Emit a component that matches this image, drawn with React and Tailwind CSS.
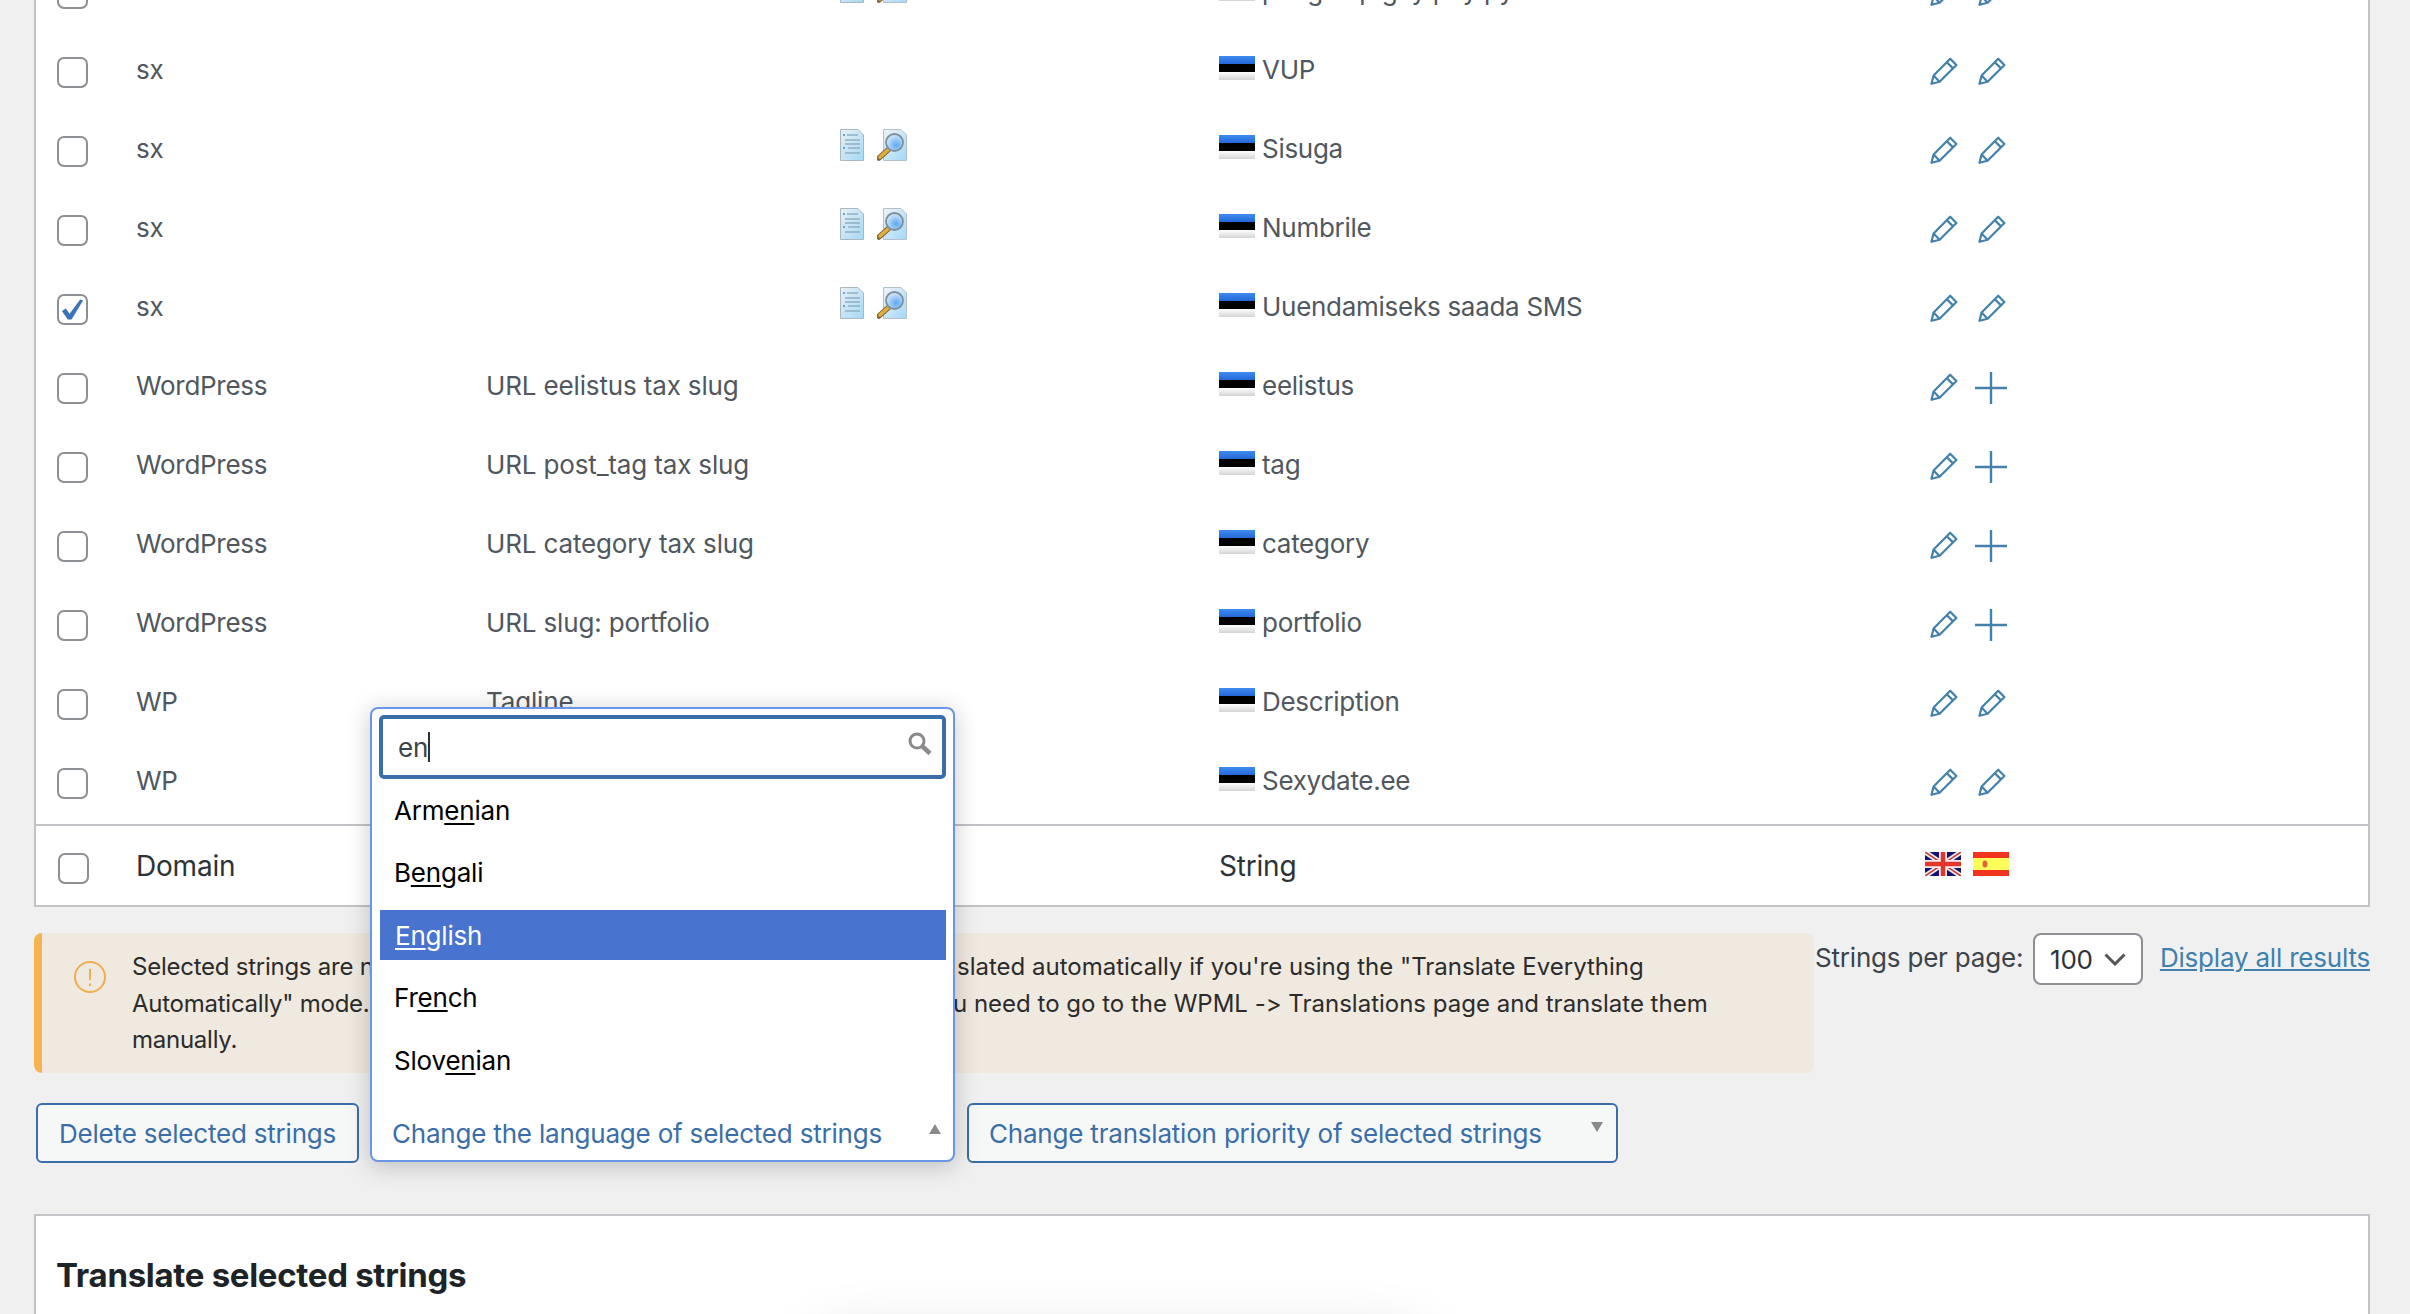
const ROWS = [
  { domain: 'sx', context: '', icons: true, text: 'pange ap gay pay py', second: 'edit' },
  { domain: 'sx', context: '', icons: false, text: 'VUP', second: 'edit' },
  { domain: 'sx', context: '', icons: true, text: 'Sisuga', second: 'edit' },
  { domain: 'sx', context: '', icons: true, text: 'Numbrile', second: 'edit' },
  { domain: 'sx', context: '', icons: true, text: 'Uuendamiseks saada SMS', second: 'edit', checked: true },
  { domain: 'WordPress', context: 'URL eelistus tax slug', icons: false, text: 'eelistus', second: 'add' },
  { domain: 'WordPress', context: 'URL post_tag tax slug', icons: false, text: 'tag', second: 'add' },
  { domain: 'WordPress', context: 'URL category tax slug', icons: false, text: 'category', second: 'add' },
  { domain: 'WordPress', context: 'URL slug: portfolio', icons: false, text: 'portfolio', second: 'add' },
  { domain: 'WP', context: 'Tagline', icons: false, text: 'Description', second: 'edit' },
  { domain: 'WP', context: '', icons: false, text: 'Sexydate.ee', second: 'edit' },
];

const OPTIONS = [
  { before: 'Arm', after: 'ian' },
  { before: 'B', after: 'gali' },
  { before: '', after: 'glish', label: 'En', active: true },
  { before: 'Fr', after: 'ch' },
  { before: 'Slov', after: 'ian' },
];

function Checkbox({ checked }) {
  return (
    <div className="flex h-[31px] w-[31px] items-center justify-center rounded-[7px] border-2 border-[#8c8f94] bg-white">
      {checked && (
        <svg width="23" height="22" viewBox="0 0 24 22" fill="#3a73b8">
          <path d="M1 12L5 9.5L9 15L20 0L23 1L11 21H7Z" />
        </svg>
      )}
    </div>
  );
}

function EstonianFlag() {
  return (
    <div className="flex h-6 w-9 shrink-0 flex-col">
      <div className="h-2 bg-gradient-to-b from-[#3f8cf0] to-[#2468d8]" />
      <div className="h-2 bg-black" />
      <div className="h-2 bg-gradient-to-b from-white to-[#d4d4d4]" />
    </div>
  );
}

function DocIcon() {
  return (
    <svg width="24" height="32" viewBox="0 0 24 32">
      <defs>
        <linearGradient id="docFill" x1="0" y1="0" x2="1" y2="1">
          <stop offset="0" stopColor="#e8f1f5" />
          <stop offset="1" stopColor="#a5d8f5" />
        </linearGradient>
      </defs>
      <path d="M0.5 0.5H18L23.5 6V31.5H0.5Z" fill="url(#docFill)" stroke="#a9b8c0" />
      <path d="M7 6H18M5 11H20M5 15H20M8 19H20M5 24H20" stroke="#8fb0c2" strokeWidth="1.3" />
      <path d="M3 6H5M3 19H5" stroke="#3d8fd0" strokeWidth="1.3" />
    </svg>
  );
}

function MagnifierIcon() {
  return (
    <svg width="30" height="32" viewBox="0 0 30 32">
      <defs>
        <linearGradient id="magPage" x1="0" y1="0" x2="1" y2="1">
          <stop offset="0" stopColor="#eef4f7" />
          <stop offset="1" stopColor="#a2d8f8" />
        </linearGradient>
        <radialGradient id="magLens" cx="0.6" cy="0.65" r="0.7">
          <stop offset="0" stopColor="#5aa9f5" />
          <stop offset="1" stopColor="#e4eff8" />
        </radialGradient>
      </defs>
      <path d="M6.5 0.5H24L29.5 6V31.5H6.5Z" fill="url(#magPage)" stroke="#b3c0c8" />
      <path d="M2 29L12 20" stroke="#7d6a3a" strokeWidth="5.5" strokeLinecap="round" />
      <path d="M3 28L12 20" stroke="#e3ae3c" strokeWidth="3.5" strokeLinecap="round" />
      <circle cx="17.5" cy="13.5" r="8.5" fill="url(#magLens)" stroke="#7d8f9a" strokeWidth="1.8" />
    </svg>
  );
}

function PencilIcon() {
  return (
    <svg width="28" height="29" viewBox="0 0 28 29" fill="none" stroke="#4380aa" strokeWidth="2.2">
      <path d="M1.5 26.8L3.6 18.5L20.2 1.7L26.4 8L9.6 24.8Z" strokeLinejoin="round" />
      <path d="M3.6 18.5L9.6 24.8M16.8 5.2L23 11.4" />
    </svg>
  );
}

function PlusIcon() {
  return (
    <svg width="32" height="32" viewBox="0 0 32 32" stroke="#4380aa" strokeWidth="2.4">
      <path d="M16 0V32M0 16H32" />
    </svg>
  );
}

function UkFlag() {
  return (
    <svg width="36" height="24" viewBox="0 0 36 24">
      <rect width="36" height="24" fill="#14146e" />
      <path d="M0 0L36 24M36 0L0 24" stroke="#eeeeee" strokeWidth="5" />
      <path d="M0 0L36 24M36 0L0 24" stroke="#d23b3b" strokeWidth="1.6" />
      <path d="M18 0V24M0 12H36" stroke="#eeeeee" strokeWidth="8" />
      <path d="M18 0V24M0 12H36" stroke="#e3352b" strokeWidth="4.5" />
    </svg>
  );
}

function SpainFlag() {
  return (
    <svg width="36" height="24" viewBox="0 0 36 24">
      <rect width="36" height="24" fill="#f0341e" />
      <rect y="6" width="36" height="12" fill="#ffff5c" />
      <ellipse cx="12" cy="12" rx="2.5" ry="3.5" fill="#d9653a" />
    </svg>
  );
}

function Row({ row }) {
  return (
    <div className="grid h-[79px] grid-cols-[100px_350px_354px_379px_711px_1fr] items-center tracking-[-0.28px] text-[#50575e]">
      <div className="pl-[21px]">
        <Checkbox checked={row.checked} />
      </div>
      <div className="pb-[7px]">{row.domain}</div>
      <div className="pb-[7px] tracking-[-0.15px]">{row.context}</div>
      <div className="flex gap-[13px] pb-[14px]">
        {row.icons && (
          <>
            <DocIcon />
            <MagnifierIcon />
          </>
        )}
      </div>
      <div className="flex items-start gap-[7px] pb-[5px]">
        <EstonianFlag />
        <span className="-mt-[1px] leading-[30px]">{row.text}</span>
      </div>
      <div className="flex items-center pb-[2px]">
        <div className="w-[45px]">
          <PencilIcon />
        </div>
        {row.second === 'edit' ? (
          <div className="ml-[3px]">
            <PencilIcon />
          </div>
        ) : (
          <PlusIcon />
        )}
      </div>
    </div>
  );
}

function LanguageDropdown() {
  return (
    <div className="absolute left-[370px] top-[707px] flex h-[455px] w-[585px] flex-col rounded-lg border-2 border-[#6a96e8] bg-white px-[7px] pt-[6px] tracking-[-0.2px] shadow-[0_4px_24px_rgba(0,0,0,0.22)]">
      <div className="flex h-[64px] items-center justify-between rounded-[5px] border-4 border-[#3a6ea8] pl-[15px] pr-[10px]">
        <div className="flex items-center text-[#3c434a]">
          <span>en</span>
          <span className="h-[30px] w-[2px] bg-[#2c3338]" />
        </div>
        <svg width="24" height="23" viewBox="0 0 24 23" fill="none" stroke="#8a8a8a" className="mb-[8px]">
          <circle cx="9" cy="9" r="7" strokeWidth="3" />
          <path d="M14 14L22 21.5" strokeWidth="4.5" />
        </svg>
      </div>
      <div className="mt-[6px] flex flex-col gap-[12.5px] text-black">
        {OPTIONS.map((opt, i) => (
          <div
            key={i}
            className={`flex h-[50px] items-center pl-[15px] ${opt.active ? 'ml-[1px] bg-[#4873cf] text-white' : ''}`}
          >
            <span>
              {opt.before}
              <span className="underline underline-offset-[3px]">{opt.label || 'en'}</span>
              {opt.after}
            </span>
          </div>
        ))}
      </div>
      <div className="mt-auto flex h-[60px] items-center justify-between pl-[13px] pr-[5px] pt-[7px] text-[#3a6ea8]">
        <span>Change the language of selected strings</span>
        <span className="mb-[10px] h-0 w-0 border-x-[6px] border-b-[10px] border-x-transparent border-b-[#8a8a8a]" />
      </div>
    </div>
  );
}

export default function App() {
  return (
    <div className="relative h-[1314px] overflow-hidden bg-[#f0f0f0] font-['Inter',sans-serif] text-[26px] tracking-[-0.2px]">
      <div className="px-[34px]">
        {/* Strings table */}
        <div className="-mt-[48px] mr-[6px] border-2 border-[#c3c4c7] bg-white">
          <div className="pb-[1px]">
            {ROWS.map((row, i) => (
              <Row key={i} row={row} />
            ))}
          </div>
          <div className="grid h-[81px] grid-cols-[100px_1083px_706px_1fr] items-center border-t-2 border-[#c3c4c7] text-[28px] text-[#2c3338]">
            <div className="pl-[22px] pt-[5px]">
              <Checkbox />
            </div>
            <div>Domain</div>
            <div>String</div>
            <div className="flex gap-3 pb-[4px]">
              <UkFlag />
              <SpainFlag />
            </div>
          </div>
        </div>

        {/* Notice and pagination */}
        <div className="mt-[26px] flex">
          <div className="flex h-[140px] w-[1780px] rounded-lg border-l-8 border-[#f5b351] bg-[#f0e9e0] pl-[32px] pt-[16px] text-[24px] tracking-normal text-[#2b2b2b] [font-feature-settings:'calt'_0]">
            <svg width="32" height="32" viewBox="0 0 32 32" fill="none" stroke="#f0ae4e" strokeWidth="2" className="mt-[12px] shrink-0">
              <circle cx="16" cy="16" r="15" />
              <path d="M16 8V19M16 22.5V25" />
            </svg>
            <div className="ml-[26px] whitespace-nowrap leading-[36.5px]">
              <div className="flex">
                <span className="w-[825px] shrink-0 overflow-hidden tracking-[-0.25px]">Selected strings are not being tran</span>
                <span>slated automatically if you're using the "Translate Everything</span>
              </div>
              <div className="flex">
                <span className="w-[821px] shrink-0 overflow-hidden tracking-[-0.25px]">Automatically" mode. If you wish to translate them, yo</span>
                <span>u need to go to the WPML -&gt; Translations page and translate them</span>
              </div>
              <div className="tracking-[-0.25px]">manually.</div>
            </div>
          </div>
          <div className="flex h-[52px] flex-1 items-center pr-[6px] text-[#3c434a]">
            <span className="ml-px w-[218px] pb-[4px]">Strings per page:</span>
            <div className="flex h-[52px] w-[110px] items-center justify-between rounded-lg border-2 border-[#8c8f94] bg-white pl-[15px] pr-[15px] text-[#2c3338]">
              <span>100</span>
              <svg width="22" height="13" viewBox="0 0 22 13" fill="none" stroke="#555555" strokeWidth="3">
                <path d="M1.5 1.5L11 11L20.5 1.5" />
              </svg>
            </div>
            <a className="ml-auto pb-[4px] text-[#3e81ad] underline">Display all results</a>
          </div>
        </div>

        {/* Bulk actions */}
        <div className="mt-[30px] flex gap-3 pl-[2px] text-[#3a6ea8]">
          <button className="h-[60px] w-[323px] rounded-md border-2 border-[#3a6ea8] bg-[#f6f7f7] pl-[21px] text-left">
            Delete selected strings
          </button>
          <div className="w-[584px]" />
          <div className="flex h-[60px] w-[651px] items-center justify-between rounded-md border-2 border-[#3a6ea8] bg-[#f6f7f7] pl-[20px] pr-[13px]">
            <span>Change translation priority of selected strings</span>
            <span className="mb-[12px] h-0 w-0 border-x-[6px] border-t-[10px] border-x-transparent border-t-[#8a8a8a]" />
          </div>
        </div>

        {/* Translate panel */}
        <div className="mr-[6px] mt-[51px] h-[200px] border-2 border-[#c3c4c7] bg-white pl-[20px] pt-[37px]">
          <h3 className="text-[33px] font-bold leading-[44px] tracking-[-0.3px] text-[#1d2327]">Translate selected strings</h3>
        </div>
      </div>

      <LanguageDropdown />
      <div className="absolute left-[820px] top-[1340px] h-[40px] w-[600px] rounded-lg bg-white shadow-[0_0_60px_rgba(0,0,0,0.18)]" />
    </div>
  );
}
